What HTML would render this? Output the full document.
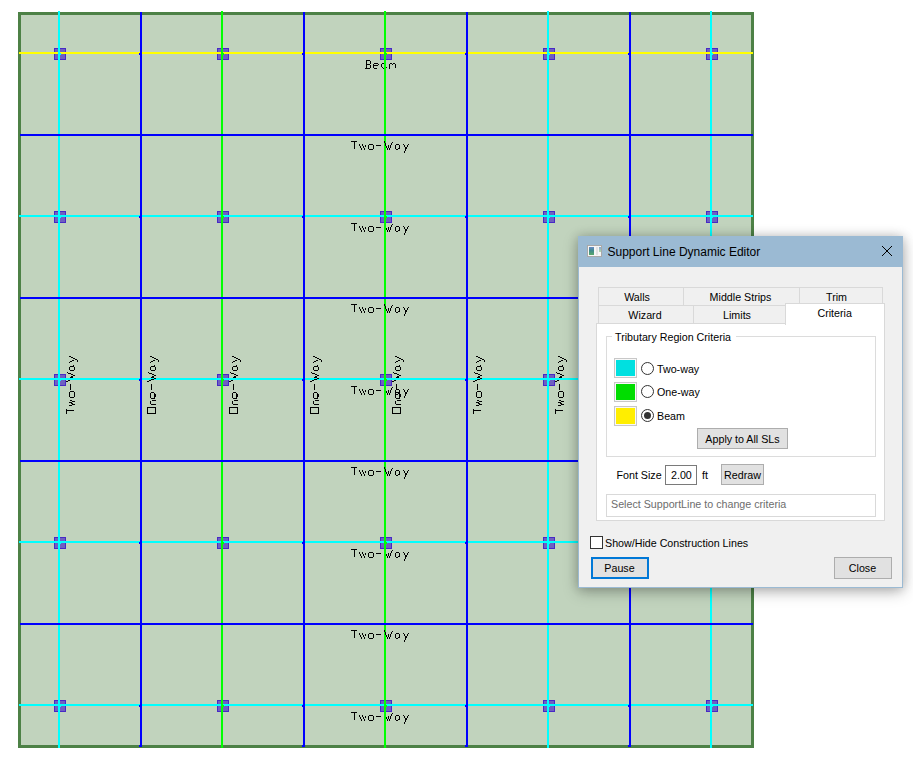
<!DOCTYPE html>
<html><head><meta charset="utf-8"><style>
html,body{margin:0;padding:0;background:#fff;width:913px;height:768px;overflow:hidden;position:relative;font-family:"Liberation Sans",sans-serif}
.a{position:absolute}
.t{position:absolute;white-space:nowrap;font-size:10.7px;color:#000;line-height:1}
</style></head><body>
<svg width="913" height="768" style="position:absolute;left:0;top:0" shape-rendering="crispEdges"><g fill="#000"><rect x="18" y="12" width="736" height="736" fill="#4d8146"/><rect x="21" y="15" width="730" height="730" fill="#c1d3bd"/><rect x="54" y="48" width="12" height="12" fill="#4728c6"/><rect x="55" y="49" width="10" height="10" fill="#6f5fc0"/><rect x="54" y="211" width="12" height="12" fill="#4728c6"/><rect x="55" y="212" width="10" height="10" fill="#6f5fc0"/><rect x="54" y="374" width="12" height="12" fill="#4728c6"/><rect x="55" y="375" width="10" height="10" fill="#6f5fc0"/><rect x="54" y="537" width="12" height="12" fill="#4728c6"/><rect x="55" y="538" width="10" height="10" fill="#6f5fc0"/><rect x="54" y="700" width="12" height="12" fill="#4728c6"/><rect x="55" y="701" width="10" height="10" fill="#6f5fc0"/><rect x="217" y="48" width="12" height="12" fill="#4728c6"/><rect x="218" y="49" width="10" height="10" fill="#6f5fc0"/><rect x="217" y="211" width="12" height="12" fill="#4728c6"/><rect x="218" y="212" width="10" height="10" fill="#6f5fc0"/><rect x="217" y="374" width="12" height="12" fill="#4728c6"/><rect x="218" y="375" width="10" height="10" fill="#6f5fc0"/><rect x="217" y="537" width="12" height="12" fill="#4728c6"/><rect x="218" y="538" width="10" height="10" fill="#6f5fc0"/><rect x="217" y="700" width="12" height="12" fill="#4728c6"/><rect x="218" y="701" width="10" height="10" fill="#6f5fc0"/><rect x="380" y="48" width="12" height="12" fill="#4728c6"/><rect x="381" y="49" width="10" height="10" fill="#6f5fc0"/><rect x="380" y="211" width="12" height="12" fill="#4728c6"/><rect x="381" y="212" width="10" height="10" fill="#6f5fc0"/><rect x="380" y="374" width="12" height="12" fill="#4728c6"/><rect x="381" y="375" width="10" height="10" fill="#6f5fc0"/><rect x="380" y="537" width="12" height="12" fill="#4728c6"/><rect x="381" y="538" width="10" height="10" fill="#6f5fc0"/><rect x="380" y="700" width="12" height="12" fill="#4728c6"/><rect x="381" y="701" width="10" height="10" fill="#6f5fc0"/><rect x="543" y="48" width="12" height="12" fill="#4728c6"/><rect x="544" y="49" width="10" height="10" fill="#6f5fc0"/><rect x="543" y="211" width="12" height="12" fill="#4728c6"/><rect x="544" y="212" width="10" height="10" fill="#6f5fc0"/><rect x="543" y="374" width="12" height="12" fill="#4728c6"/><rect x="544" y="375" width="10" height="10" fill="#6f5fc0"/><rect x="543" y="537" width="12" height="12" fill="#4728c6"/><rect x="544" y="538" width="10" height="10" fill="#6f5fc0"/><rect x="543" y="700" width="12" height="12" fill="#4728c6"/><rect x="544" y="701" width="10" height="10" fill="#6f5fc0"/><rect x="706" y="48" width="12" height="12" fill="#4728c6"/><rect x="707" y="49" width="10" height="10" fill="#6f5fc0"/><rect x="706" y="211" width="12" height="12" fill="#4728c6"/><rect x="707" y="212" width="10" height="10" fill="#6f5fc0"/><rect x="706" y="374" width="12" height="12" fill="#4728c6"/><rect x="707" y="375" width="10" height="10" fill="#6f5fc0"/><rect x="706" y="537" width="12" height="12" fill="#4728c6"/><rect x="707" y="538" width="10" height="10" fill="#6f5fc0"/><rect x="706" y="700" width="12" height="12" fill="#4728c6"/><rect x="707" y="701" width="10" height="10" fill="#6f5fc0"/><path transform="translate(365,60)" d="M1,0h4v1h-4zM1,1h1v1h-1zM5,1h1v1h-1zM1,2h1v1h-1zM5,2h1v1h-1zM1,3h1v1h-1zM5,3h1v1h-1zM1,4h4v1h-4zM1,5h1v1h-1zM5,5h1v1h-1zM1,6h1v1h-1zM5,6h1v1h-1zM1,7h1v1h-1zM5,7h1v1h-1zM0,8h5v1h-5zM9,3h4v1h-4zM8,4h1v1h-1zM13,4h1v1h-1zM8,5h5v1h-5zM8,6h1v1h-1zM8,7h1v1h-1zM9,8h3v1h-3zM17,3h4v1h-4zM16,4h1v1h-1zM16,5h1v1h-1zM16,6h1v1h-1zM17,7h1v1h-1zM21,7h1v1h-1zM18,8h1v1h-1zM25,3h2v1h-2zM28,3h2v1h-2zM24,4h1v1h-1zM27,4h1v1h-1zM30,4h1v1h-1zM24,5h1v1h-1zM30,5h1v1h-1zM24,6h1v1h-1zM30,6h1v1h-1zM24,7h1v1h-1zM30,7h1v1h-1zM24,8h1v1h-1z"/><path transform="translate(351,223)" d="M0,0h6v1h-6zM3,1h1v1h-1zM3,2h1v1h-1zM3,3h1v1h-1zM3,4h1v1h-1zM3,5h1v1h-1zM3,6h1v1h-1zM3,7h1v1h-1zM8,3h1v1h-1zM11,3h1v1h-1zM8,4h1v1h-1zM11,4h1v1h-1zM14,4h1v1h-1zM9,5h1v1h-1zM12,5h1v1h-1zM14,5h1v1h-1zM9,6h1v1h-1zM12,6h1v1h-1zM10,7h1v1h-1zM13,7h1v1h-1zM10,8h1v1h-1zM13,8h1v1h-1zM18,3h4v1h-4zM17,4h1v1h-1zM22,4h1v1h-1zM17,5h1v1h-1zM22,5h1v1h-1zM17,6h1v1h-1zM22,6h1v1h-1zM17,7h1v1h-1zM22,7h1v1h-1zM18,8h4v1h-4zM25,4h5v1h-5zM33,0h1v1h-1zM33,1h1v1h-1zM41,1h1v1h-1zM34,2h1v1h-1zM40,2h1v1h-1zM34,3h1v1h-1zM40,3h1v1h-1zM34,4h1v1h-1zM37,4h1v1h-1zM39,4h1v1h-1zM35,5h1v1h-1zM37,5h1v1h-1zM39,5h1v1h-1zM35,6h1v1h-1zM37,6h1v1h-1zM39,6h1v1h-1zM36,7h1v1h-1zM38,7h1v1h-1zM36,8h1v1h-1zM38,8h1v1h-1zM45,3h3v1h-3zM44,4h1v1h-1zM48,4h1v1h-1zM44,5h1v1h-1zM48,5h1v1h-1zM44,6h1v1h-1zM48,6h1v1h-1zM44,7h1v1h-1zM47,7h2v1h-2zM45,8h2v1h-2zM52,3h1v1h-1zM57,3h1v1h-1zM53,4h1v1h-1zM56,4h1v1h-1zM53,5h1v1h-1zM56,5h1v1h-1zM54,6h2v1h-2zM54,7h2v1h-2zM54,8h1v1h-1zM54,9h1v1h-1zM53,10h1v1h-1zM53,11h1v1h-1z"/><path transform="translate(351,386)" d="M0,0h6v1h-6zM3,1h1v1h-1zM3,2h1v1h-1zM3,3h1v1h-1zM3,4h1v1h-1zM3,5h1v1h-1zM3,6h1v1h-1zM3,7h1v1h-1zM8,3h1v1h-1zM11,3h1v1h-1zM8,4h1v1h-1zM11,4h1v1h-1zM14,4h1v1h-1zM9,5h1v1h-1zM12,5h1v1h-1zM14,5h1v1h-1zM9,6h1v1h-1zM12,6h1v1h-1zM10,7h1v1h-1zM13,7h1v1h-1zM10,8h1v1h-1zM13,8h1v1h-1zM18,3h4v1h-4zM17,4h1v1h-1zM22,4h1v1h-1zM17,5h1v1h-1zM22,5h1v1h-1zM17,6h1v1h-1zM22,6h1v1h-1zM17,7h1v1h-1zM22,7h1v1h-1zM18,8h4v1h-4zM25,4h5v1h-5zM33,0h1v1h-1zM33,1h1v1h-1zM41,1h1v1h-1zM34,2h1v1h-1zM40,2h1v1h-1zM34,3h1v1h-1zM40,3h1v1h-1zM34,4h1v1h-1zM37,4h1v1h-1zM39,4h1v1h-1zM35,5h1v1h-1zM37,5h1v1h-1zM39,5h1v1h-1zM35,6h1v1h-1zM37,6h1v1h-1zM39,6h1v1h-1zM36,7h1v1h-1zM38,7h1v1h-1zM36,8h1v1h-1zM38,8h1v1h-1zM45,3h3v1h-3zM44,4h1v1h-1zM48,4h1v1h-1zM44,5h1v1h-1zM48,5h1v1h-1zM44,6h1v1h-1zM48,6h1v1h-1zM44,7h1v1h-1zM47,7h2v1h-2zM45,8h2v1h-2zM52,3h1v1h-1zM57,3h1v1h-1zM53,4h1v1h-1zM56,4h1v1h-1zM53,5h1v1h-1zM56,5h1v1h-1zM54,6h2v1h-2zM54,7h2v1h-2zM54,8h1v1h-1zM54,9h1v1h-1zM53,10h1v1h-1zM53,11h1v1h-1z"/><path transform="translate(351,549)" d="M0,0h6v1h-6zM3,1h1v1h-1zM3,2h1v1h-1zM3,3h1v1h-1zM3,4h1v1h-1zM3,5h1v1h-1zM3,6h1v1h-1zM3,7h1v1h-1zM8,3h1v1h-1zM11,3h1v1h-1zM8,4h1v1h-1zM11,4h1v1h-1zM14,4h1v1h-1zM9,5h1v1h-1zM12,5h1v1h-1zM14,5h1v1h-1zM9,6h1v1h-1zM12,6h1v1h-1zM10,7h1v1h-1zM13,7h1v1h-1zM10,8h1v1h-1zM13,8h1v1h-1zM18,3h4v1h-4zM17,4h1v1h-1zM22,4h1v1h-1zM17,5h1v1h-1zM22,5h1v1h-1zM17,6h1v1h-1zM22,6h1v1h-1zM17,7h1v1h-1zM22,7h1v1h-1zM18,8h4v1h-4zM25,4h5v1h-5zM33,0h1v1h-1zM33,1h1v1h-1zM41,1h1v1h-1zM34,2h1v1h-1zM40,2h1v1h-1zM34,3h1v1h-1zM40,3h1v1h-1zM34,4h1v1h-1zM37,4h1v1h-1zM39,4h1v1h-1zM35,5h1v1h-1zM37,5h1v1h-1zM39,5h1v1h-1zM35,6h1v1h-1zM37,6h1v1h-1zM39,6h1v1h-1zM36,7h1v1h-1zM38,7h1v1h-1zM36,8h1v1h-1zM38,8h1v1h-1zM45,3h3v1h-3zM44,4h1v1h-1zM48,4h1v1h-1zM44,5h1v1h-1zM48,5h1v1h-1zM44,6h1v1h-1zM48,6h1v1h-1zM44,7h1v1h-1zM47,7h2v1h-2zM45,8h2v1h-2zM52,3h1v1h-1zM57,3h1v1h-1zM53,4h1v1h-1zM56,4h1v1h-1zM53,5h1v1h-1zM56,5h1v1h-1zM54,6h2v1h-2zM54,7h2v1h-2zM54,8h1v1h-1zM54,9h1v1h-1zM53,10h1v1h-1zM53,11h1v1h-1z"/><path transform="translate(351,712)" d="M0,0h6v1h-6zM3,1h1v1h-1zM3,2h1v1h-1zM3,3h1v1h-1zM3,4h1v1h-1zM3,5h1v1h-1zM3,6h1v1h-1zM3,7h1v1h-1zM8,3h1v1h-1zM11,3h1v1h-1zM8,4h1v1h-1zM11,4h1v1h-1zM14,4h1v1h-1zM9,5h1v1h-1zM12,5h1v1h-1zM14,5h1v1h-1zM9,6h1v1h-1zM12,6h1v1h-1zM10,7h1v1h-1zM13,7h1v1h-1zM10,8h1v1h-1zM13,8h1v1h-1zM18,3h4v1h-4zM17,4h1v1h-1zM22,4h1v1h-1zM17,5h1v1h-1zM22,5h1v1h-1zM17,6h1v1h-1zM22,6h1v1h-1zM17,7h1v1h-1zM22,7h1v1h-1zM18,8h4v1h-4zM25,4h5v1h-5zM33,0h1v1h-1zM33,1h1v1h-1zM41,1h1v1h-1zM34,2h1v1h-1zM40,2h1v1h-1zM34,3h1v1h-1zM40,3h1v1h-1zM34,4h1v1h-1zM37,4h1v1h-1zM39,4h1v1h-1zM35,5h1v1h-1zM37,5h1v1h-1zM39,5h1v1h-1zM35,6h1v1h-1zM37,6h1v1h-1zM39,6h1v1h-1zM36,7h1v1h-1zM38,7h1v1h-1zM36,8h1v1h-1zM38,8h1v1h-1zM45,3h3v1h-3zM44,4h1v1h-1zM48,4h1v1h-1zM44,5h1v1h-1zM48,5h1v1h-1zM44,6h1v1h-1zM48,6h1v1h-1zM44,7h1v1h-1zM47,7h2v1h-2zM45,8h2v1h-2zM52,3h1v1h-1zM57,3h1v1h-1zM53,4h1v1h-1zM56,4h1v1h-1zM53,5h1v1h-1zM56,5h1v1h-1zM54,6h2v1h-2zM54,7h2v1h-2zM54,8h1v1h-1zM54,9h1v1h-1zM53,10h1v1h-1zM53,11h1v1h-1z"/><path d="M66,413h1v1h-1zM66,412h1v1h-1zM66,411h1v1h-1zM66,410h1v1h-1zM66,409h1v1h-1zM66,381h1v1h-1zM67,410h1v1h-1zM67,381h1v1h-1zM67,372h1v1h-1zM68,410h1v1h-1zM68,380h1v1h-1zM68,373h1v1h-1zM69,410h1v1h-1zM69,405h1v1h-1zM69,402h1v1h-1zM69,396h1v1h-1zM69,395h1v1h-1zM69,394h1v1h-1zM69,393h1v1h-1zM69,392h1v1h-1zM69,380h1v1h-1zM69,373h1v1h-1zM69,369h1v1h-1zM69,368h1v1h-1zM69,367h1v1h-1zM69,362h1v1h-1zM69,356h1v1h-1zM70,410h1v1h-1zM70,405h1v1h-1zM70,402h1v1h-1zM70,400h1v1h-1zM70,397h1v1h-1zM70,391h1v1h-1zM70,389h1v1h-1zM70,388h1v1h-1zM70,387h1v1h-1zM70,386h1v1h-1zM70,385h1v1h-1zM70,384h1v1h-1zM70,379h1v1h-1zM70,377h1v1h-1zM70,373h1v1h-1zM70,370h1v1h-1zM70,366h1v1h-1zM70,361h1v1h-1zM70,356h1v1h-1zM71,410h1v1h-1zM71,405h1v1h-1zM71,403h1v1h-1zM71,402h1v1h-1zM71,400h1v1h-1zM71,397h1v1h-1zM71,391h1v1h-1zM71,379h1v1h-1zM71,377h1v1h-1zM71,376h1v1h-1zM71,374h1v1h-1zM71,370h1v1h-1zM71,366h1v1h-1zM71,361h1v1h-1zM71,357h1v1h-1zM72,410h1v1h-1zM72,404h1v1h-1zM72,403h1v1h-1zM72,401h1v1h-1zM72,397h1v1h-1zM72,391h1v1h-1zM72,379h1v1h-1zM72,377h1v1h-1zM72,376h1v1h-1zM72,374h1v1h-1zM72,370h1v1h-1zM72,366h1v1h-1zM72,360h1v1h-1zM72,357h1v1h-1zM73,410h1v1h-1zM73,404h1v1h-1zM73,401h1v1h-1zM73,397h1v1h-1zM73,391h1v1h-1zM73,378h1v1h-1zM73,375h1v1h-1zM73,370h1v1h-1zM73,366h1v1h-1zM73,365h1v1h-1zM73,360h1v1h-1zM73,358h1v1h-1zM74,404h1v1h-1zM74,401h1v1h-1zM74,396h1v1h-1zM74,395h1v1h-1zM74,394h1v1h-1zM74,393h1v1h-1zM74,392h1v1h-1zM74,378h1v1h-1zM74,375h1v1h-1zM74,369h1v1h-1zM74,368h1v1h-1zM74,367h1v1h-1zM74,358h1v1h-1zM75,359h1v1h-1zM76,359h1v1h-1zM77,361h1v1h-1zM77,360h1v1h-1z"/><path d="M229,413h1v1h-1zM229,412h1v1h-1zM229,411h1v1h-1zM229,410h1v1h-1zM229,409h1v1h-1zM229,408h1v1h-1zM229,407h1v1h-1zM229,381h1v1h-1zM230,413h1v1h-1zM230,407h1v1h-1zM230,381h1v1h-1zM230,372h1v1h-1zM231,413h1v1h-1zM231,407h1v1h-1zM231,380h1v1h-1zM231,373h1v1h-1zM232,413h1v1h-1zM232,407h1v1h-1zM232,403h1v1h-1zM232,402h1v1h-1zM232,401h1v1h-1zM232,397h1v1h-1zM232,396h1v1h-1zM232,395h1v1h-1zM232,394h1v1h-1zM232,393h1v1h-1zM232,380h1v1h-1zM232,373h1v1h-1zM232,369h1v1h-1zM232,368h1v1h-1zM232,367h1v1h-1zM232,362h1v1h-1zM232,356h1v1h-1zM233,413h1v1h-1zM233,407h1v1h-1zM233,404h1v1h-1zM233,398h1v1h-1zM233,392h1v1h-1zM233,389h1v1h-1zM233,388h1v1h-1zM233,387h1v1h-1zM233,386h1v1h-1zM233,385h1v1h-1zM233,384h1v1h-1zM233,379h1v1h-1zM233,377h1v1h-1zM233,373h1v1h-1zM233,370h1v1h-1zM233,366h1v1h-1zM233,361h1v1h-1zM233,356h1v1h-1zM234,413h1v1h-1zM234,407h1v1h-1zM234,404h1v1h-1zM234,400h1v1h-1zM234,398h1v1h-1zM234,392h1v1h-1zM234,379h1v1h-1zM234,377h1v1h-1zM234,376h1v1h-1zM234,374h1v1h-1zM234,370h1v1h-1zM234,366h1v1h-1zM234,361h1v1h-1zM234,357h1v1h-1zM235,413h1v1h-1zM235,407h1v1h-1zM235,404h1v1h-1zM235,400h1v1h-1zM235,398h1v1h-1zM235,392h1v1h-1zM235,379h1v1h-1zM235,377h1v1h-1zM235,376h1v1h-1zM235,374h1v1h-1zM235,370h1v1h-1zM235,366h1v1h-1zM235,360h1v1h-1zM235,357h1v1h-1zM236,413h1v1h-1zM236,407h1v1h-1zM236,404h1v1h-1zM236,400h1v1h-1zM236,398h1v1h-1zM236,397h1v1h-1zM236,396h1v1h-1zM236,395h1v1h-1zM236,394h1v1h-1zM236,393h1v1h-1zM236,378h1v1h-1zM236,375h1v1h-1zM236,370h1v1h-1zM236,366h1v1h-1zM236,365h1v1h-1zM236,360h1v1h-1zM236,358h1v1h-1zM237,413h1v1h-1zM237,412h1v1h-1zM237,411h1v1h-1zM237,410h1v1h-1zM237,409h1v1h-1zM237,408h1v1h-1zM237,407h1v1h-1zM237,404h1v1h-1zM237,400h1v1h-1zM237,396h1v1h-1zM237,395h1v1h-1zM237,394h1v1h-1zM237,378h1v1h-1zM237,375h1v1h-1zM237,369h1v1h-1zM237,368h1v1h-1zM237,367h1v1h-1zM237,358h1v1h-1zM238,359h1v1h-1zM239,359h1v1h-1zM240,361h1v1h-1zM240,360h1v1h-1z"/><path d="M392,413h1v1h-1zM392,412h1v1h-1zM392,411h1v1h-1zM392,410h1v1h-1zM392,409h1v1h-1zM392,408h1v1h-1zM392,407h1v1h-1zM392,381h1v1h-1zM393,413h1v1h-1zM393,407h1v1h-1zM393,381h1v1h-1zM393,372h1v1h-1zM394,413h1v1h-1zM394,407h1v1h-1zM394,380h1v1h-1zM394,373h1v1h-1zM395,413h1v1h-1zM395,407h1v1h-1zM395,403h1v1h-1zM395,402h1v1h-1zM395,401h1v1h-1zM395,397h1v1h-1zM395,396h1v1h-1zM395,395h1v1h-1zM395,394h1v1h-1zM395,393h1v1h-1zM395,380h1v1h-1zM395,373h1v1h-1zM395,369h1v1h-1zM395,368h1v1h-1zM395,367h1v1h-1zM395,362h1v1h-1zM395,356h1v1h-1zM396,413h1v1h-1zM396,407h1v1h-1zM396,404h1v1h-1zM396,398h1v1h-1zM396,392h1v1h-1zM396,389h1v1h-1zM396,388h1v1h-1zM396,387h1v1h-1zM396,386h1v1h-1zM396,385h1v1h-1zM396,384h1v1h-1zM396,379h1v1h-1zM396,377h1v1h-1zM396,373h1v1h-1zM396,370h1v1h-1zM396,366h1v1h-1zM396,361h1v1h-1zM396,356h1v1h-1zM397,413h1v1h-1zM397,407h1v1h-1zM397,404h1v1h-1zM397,400h1v1h-1zM397,398h1v1h-1zM397,392h1v1h-1zM397,379h1v1h-1zM397,377h1v1h-1zM397,376h1v1h-1zM397,374h1v1h-1zM397,370h1v1h-1zM397,366h1v1h-1zM397,361h1v1h-1zM397,357h1v1h-1zM398,413h1v1h-1zM398,407h1v1h-1zM398,404h1v1h-1zM398,400h1v1h-1zM398,398h1v1h-1zM398,392h1v1h-1zM398,379h1v1h-1zM398,377h1v1h-1zM398,376h1v1h-1zM398,374h1v1h-1zM398,370h1v1h-1zM398,366h1v1h-1zM398,360h1v1h-1zM398,357h1v1h-1zM399,413h1v1h-1zM399,407h1v1h-1zM399,404h1v1h-1zM399,400h1v1h-1zM399,398h1v1h-1zM399,397h1v1h-1zM399,396h1v1h-1zM399,395h1v1h-1zM399,394h1v1h-1zM399,393h1v1h-1zM399,378h1v1h-1zM399,375h1v1h-1zM399,370h1v1h-1zM399,366h1v1h-1zM399,365h1v1h-1zM399,360h1v1h-1zM399,358h1v1h-1zM400,413h1v1h-1zM400,412h1v1h-1zM400,411h1v1h-1zM400,410h1v1h-1zM400,409h1v1h-1zM400,408h1v1h-1zM400,407h1v1h-1zM400,404h1v1h-1zM400,400h1v1h-1zM400,396h1v1h-1zM400,395h1v1h-1zM400,394h1v1h-1zM400,378h1v1h-1zM400,375h1v1h-1zM400,369h1v1h-1zM400,368h1v1h-1zM400,367h1v1h-1zM400,358h1v1h-1zM401,359h1v1h-1zM402,359h1v1h-1zM403,361h1v1h-1zM403,360h1v1h-1z"/><path d="M555,413h1v1h-1zM555,412h1v1h-1zM555,411h1v1h-1zM555,410h1v1h-1zM555,409h1v1h-1zM555,381h1v1h-1zM556,410h1v1h-1zM556,381h1v1h-1zM556,372h1v1h-1zM557,410h1v1h-1zM557,380h1v1h-1zM557,373h1v1h-1zM558,410h1v1h-1zM558,405h1v1h-1zM558,402h1v1h-1zM558,396h1v1h-1zM558,395h1v1h-1zM558,394h1v1h-1zM558,393h1v1h-1zM558,392h1v1h-1zM558,380h1v1h-1zM558,373h1v1h-1zM558,369h1v1h-1zM558,368h1v1h-1zM558,367h1v1h-1zM558,362h1v1h-1zM558,356h1v1h-1zM559,410h1v1h-1zM559,405h1v1h-1zM559,402h1v1h-1zM559,400h1v1h-1zM559,397h1v1h-1zM559,391h1v1h-1zM559,389h1v1h-1zM559,388h1v1h-1zM559,387h1v1h-1zM559,386h1v1h-1zM559,385h1v1h-1zM559,384h1v1h-1zM559,379h1v1h-1zM559,377h1v1h-1zM559,373h1v1h-1zM559,370h1v1h-1zM559,366h1v1h-1zM559,361h1v1h-1zM559,356h1v1h-1zM560,410h1v1h-1zM560,405h1v1h-1zM560,403h1v1h-1zM560,402h1v1h-1zM560,400h1v1h-1zM560,397h1v1h-1zM560,391h1v1h-1zM560,379h1v1h-1zM560,377h1v1h-1zM560,376h1v1h-1zM560,374h1v1h-1zM560,370h1v1h-1zM560,366h1v1h-1zM560,361h1v1h-1zM560,357h1v1h-1zM561,410h1v1h-1zM561,404h1v1h-1zM561,403h1v1h-1zM561,401h1v1h-1zM561,397h1v1h-1zM561,391h1v1h-1zM561,379h1v1h-1zM561,377h1v1h-1zM561,376h1v1h-1zM561,374h1v1h-1zM561,370h1v1h-1zM561,366h1v1h-1zM561,360h1v1h-1zM561,357h1v1h-1zM562,410h1v1h-1zM562,404h1v1h-1zM562,401h1v1h-1zM562,397h1v1h-1zM562,391h1v1h-1zM562,378h1v1h-1zM562,375h1v1h-1zM562,370h1v1h-1zM562,366h1v1h-1zM562,365h1v1h-1zM562,360h1v1h-1zM562,358h1v1h-1zM563,404h1v1h-1zM563,401h1v1h-1zM563,396h1v1h-1zM563,395h1v1h-1zM563,394h1v1h-1zM563,393h1v1h-1zM563,392h1v1h-1zM563,378h1v1h-1zM563,375h1v1h-1zM563,369h1v1h-1zM563,368h1v1h-1zM563,367h1v1h-1zM563,358h1v1h-1zM564,359h1v1h-1zM565,359h1v1h-1zM566,361h1v1h-1zM566,360h1v1h-1z"/><rect x="19" y="52" width="734" height="2" fill="#ffff00"/><rect x="19" y="215" width="734" height="2" fill="#00ffff"/><rect x="19" y="378" width="734" height="2" fill="#00ffff"/><rect x="19" y="541" width="734" height="2" fill="#00ffff"/><rect x="19" y="704" width="734" height="2" fill="#00ffff"/><rect x="58" y="11" width="2" height="737" fill="#00ffff"/><rect x="60" y="53" width="1" height="2" fill="#00ffff"/><rect x="60" y="216" width="1" height="2" fill="#00ffff"/><rect x="60" y="379" width="1" height="2" fill="#00ffff"/><rect x="60" y="542" width="1" height="2" fill="#00ffff"/><rect x="60" y="705" width="1" height="2" fill="#00ffff"/><rect x="221" y="11" width="2" height="737" fill="#00ff00"/><rect x="223" y="53" width="1" height="2" fill="#00ff00"/><rect x="223" y="216" width="1" height="2" fill="#00ff00"/><rect x="223" y="379" width="1" height="2" fill="#00ff00"/><rect x="223" y="542" width="1" height="2" fill="#00ff00"/><rect x="223" y="705" width="1" height="2" fill="#00ff00"/><rect x="384" y="11" width="2" height="737" fill="#00ff00"/><rect x="386" y="53" width="1" height="2" fill="#00ff00"/><rect x="386" y="216" width="1" height="2" fill="#00ff00"/><rect x="386" y="379" width="1" height="2" fill="#00ff00"/><rect x="386" y="542" width="1" height="2" fill="#00ff00"/><rect x="386" y="705" width="1" height="2" fill="#00ff00"/><rect x="547" y="11" width="2" height="737" fill="#00ffff"/><rect x="549" y="53" width="1" height="2" fill="#00ffff"/><rect x="549" y="216" width="1" height="2" fill="#00ffff"/><rect x="549" y="379" width="1" height="2" fill="#00ffff"/><rect x="549" y="542" width="1" height="2" fill="#00ffff"/><rect x="549" y="705" width="1" height="2" fill="#00ffff"/><rect x="710" y="11" width="2" height="737" fill="#00ffff"/><rect x="712" y="53" width="1" height="2" fill="#00ffff"/><rect x="712" y="216" width="1" height="2" fill="#00ffff"/><rect x="712" y="379" width="1" height="2" fill="#00ffff"/><rect x="712" y="542" width="1" height="2" fill="#00ffff"/><rect x="712" y="705" width="1" height="2" fill="#00ffff"/><rect x="20" y="134" width="733" height="2" fill="#0000ff"/><rect x="20" y="297" width="733" height="2" fill="#0000ff"/><rect x="20" y="460" width="733" height="2" fill="#0000ff"/><rect x="20" y="623" width="733" height="2" fill="#0000ff"/><rect x="140" y="12" width="2" height="735" fill="#0000ff"/><rect x="139" y="53" width="1" height="2" fill="#0000ff"/><rect x="139" y="216" width="1" height="2" fill="#0000ff"/><rect x="139" y="379" width="1" height="2" fill="#0000ff"/><rect x="139" y="542" width="1" height="2" fill="#0000ff"/><rect x="139" y="705" width="1" height="2" fill="#0000ff"/><rect x="139" y="745" width="1" height="2" fill="#0000ff"/><rect x="303" y="12" width="2" height="735" fill="#0000ff"/><rect x="302" y="53" width="1" height="2" fill="#0000ff"/><rect x="302" y="216" width="1" height="2" fill="#0000ff"/><rect x="302" y="379" width="1" height="2" fill="#0000ff"/><rect x="302" y="542" width="1" height="2" fill="#0000ff"/><rect x="302" y="705" width="1" height="2" fill="#0000ff"/><rect x="302" y="745" width="1" height="2" fill="#0000ff"/><rect x="466" y="12" width="2" height="735" fill="#0000ff"/><rect x="465" y="53" width="1" height="2" fill="#0000ff"/><rect x="465" y="216" width="1" height="2" fill="#0000ff"/><rect x="465" y="379" width="1" height="2" fill="#0000ff"/><rect x="465" y="542" width="1" height="2" fill="#0000ff"/><rect x="465" y="705" width="1" height="2" fill="#0000ff"/><rect x="465" y="745" width="1" height="2" fill="#0000ff"/><rect x="629" y="12" width="2" height="735" fill="#0000ff"/><rect x="628" y="53" width="1" height="2" fill="#0000ff"/><rect x="628" y="216" width="1" height="2" fill="#0000ff"/><rect x="628" y="379" width="1" height="2" fill="#0000ff"/><rect x="628" y="542" width="1" height="2" fill="#0000ff"/><rect x="628" y="705" width="1" height="2" fill="#0000ff"/><rect x="628" y="745" width="1" height="2" fill="#0000ff"/><path transform="translate(351,141)" d="M0,0h6v1h-6zM3,1h1v1h-1zM3,2h1v1h-1zM3,3h1v1h-1zM3,4h1v1h-1zM3,5h1v1h-1zM3,6h1v1h-1zM3,7h1v1h-1zM8,3h1v1h-1zM11,3h1v1h-1zM8,4h1v1h-1zM11,4h1v1h-1zM14,4h1v1h-1zM9,5h1v1h-1zM12,5h1v1h-1zM14,5h1v1h-1zM9,6h1v1h-1zM12,6h1v1h-1zM10,7h1v1h-1zM13,7h1v1h-1zM10,8h1v1h-1zM13,8h1v1h-1zM18,3h4v1h-4zM17,4h1v1h-1zM22,4h1v1h-1zM17,5h1v1h-1zM22,5h1v1h-1zM17,6h1v1h-1zM22,6h1v1h-1zM17,7h1v1h-1zM22,7h1v1h-1zM18,8h4v1h-4zM25,4h5v1h-5zM33,0h1v1h-1zM33,1h1v1h-1zM41,1h1v1h-1zM34,2h1v1h-1zM40,2h1v1h-1zM34,3h1v1h-1zM40,3h1v1h-1zM34,4h1v1h-1zM37,4h1v1h-1zM39,4h1v1h-1zM35,5h1v1h-1zM37,5h1v1h-1zM39,5h1v1h-1zM35,6h1v1h-1zM37,6h1v1h-1zM39,6h1v1h-1zM36,7h1v1h-1zM38,7h1v1h-1zM36,8h1v1h-1zM38,8h1v1h-1zM45,3h3v1h-3zM44,4h1v1h-1zM48,4h1v1h-1zM44,5h1v1h-1zM48,5h1v1h-1zM44,6h1v1h-1zM48,6h1v1h-1zM44,7h1v1h-1zM47,7h2v1h-2zM45,8h2v1h-2zM52,3h1v1h-1zM57,3h1v1h-1zM53,4h1v1h-1zM56,4h1v1h-1zM53,5h1v1h-1zM56,5h1v1h-1zM54,6h2v1h-2zM54,7h2v1h-2zM54,8h1v1h-1zM54,9h1v1h-1zM53,10h1v1h-1zM53,11h1v1h-1z"/><path transform="translate(351,304)" d="M0,0h6v1h-6zM3,1h1v1h-1zM3,2h1v1h-1zM3,3h1v1h-1zM3,4h1v1h-1zM3,5h1v1h-1zM3,6h1v1h-1zM3,7h1v1h-1zM8,3h1v1h-1zM11,3h1v1h-1zM8,4h1v1h-1zM11,4h1v1h-1zM14,4h1v1h-1zM9,5h1v1h-1zM12,5h1v1h-1zM14,5h1v1h-1zM9,6h1v1h-1zM12,6h1v1h-1zM10,7h1v1h-1zM13,7h1v1h-1zM10,8h1v1h-1zM13,8h1v1h-1zM18,3h4v1h-4zM17,4h1v1h-1zM22,4h1v1h-1zM17,5h1v1h-1zM22,5h1v1h-1zM17,6h1v1h-1zM22,6h1v1h-1zM17,7h1v1h-1zM22,7h1v1h-1zM18,8h4v1h-4zM25,4h5v1h-5zM33,0h1v1h-1zM33,1h1v1h-1zM41,1h1v1h-1zM34,2h1v1h-1zM40,2h1v1h-1zM34,3h1v1h-1zM40,3h1v1h-1zM34,4h1v1h-1zM37,4h1v1h-1zM39,4h1v1h-1zM35,5h1v1h-1zM37,5h1v1h-1zM39,5h1v1h-1zM35,6h1v1h-1zM37,6h1v1h-1zM39,6h1v1h-1zM36,7h1v1h-1zM38,7h1v1h-1zM36,8h1v1h-1zM38,8h1v1h-1zM45,3h3v1h-3zM44,4h1v1h-1zM48,4h1v1h-1zM44,5h1v1h-1zM48,5h1v1h-1zM44,6h1v1h-1zM48,6h1v1h-1zM44,7h1v1h-1zM47,7h2v1h-2zM45,8h2v1h-2zM52,3h1v1h-1zM57,3h1v1h-1zM53,4h1v1h-1zM56,4h1v1h-1zM53,5h1v1h-1zM56,5h1v1h-1zM54,6h2v1h-2zM54,7h2v1h-2zM54,8h1v1h-1zM54,9h1v1h-1zM53,10h1v1h-1zM53,11h1v1h-1z"/><path transform="translate(351,467)" d="M0,0h6v1h-6zM3,1h1v1h-1zM3,2h1v1h-1zM3,3h1v1h-1zM3,4h1v1h-1zM3,5h1v1h-1zM3,6h1v1h-1zM3,7h1v1h-1zM8,3h1v1h-1zM11,3h1v1h-1zM8,4h1v1h-1zM11,4h1v1h-1zM14,4h1v1h-1zM9,5h1v1h-1zM12,5h1v1h-1zM14,5h1v1h-1zM9,6h1v1h-1zM12,6h1v1h-1zM10,7h1v1h-1zM13,7h1v1h-1zM10,8h1v1h-1zM13,8h1v1h-1zM18,3h4v1h-4zM17,4h1v1h-1zM22,4h1v1h-1zM17,5h1v1h-1zM22,5h1v1h-1zM17,6h1v1h-1zM22,6h1v1h-1zM17,7h1v1h-1zM22,7h1v1h-1zM18,8h4v1h-4zM25,4h5v1h-5zM33,0h1v1h-1zM33,1h1v1h-1zM41,1h1v1h-1zM34,2h1v1h-1zM40,2h1v1h-1zM34,3h1v1h-1zM40,3h1v1h-1zM34,4h1v1h-1zM37,4h1v1h-1zM39,4h1v1h-1zM35,5h1v1h-1zM37,5h1v1h-1zM39,5h1v1h-1zM35,6h1v1h-1zM37,6h1v1h-1zM39,6h1v1h-1zM36,7h1v1h-1zM38,7h1v1h-1zM36,8h1v1h-1zM38,8h1v1h-1zM45,3h3v1h-3zM44,4h1v1h-1zM48,4h1v1h-1zM44,5h1v1h-1zM48,5h1v1h-1zM44,6h1v1h-1zM48,6h1v1h-1zM44,7h1v1h-1zM47,7h2v1h-2zM45,8h2v1h-2zM52,3h1v1h-1zM57,3h1v1h-1zM53,4h1v1h-1zM56,4h1v1h-1zM53,5h1v1h-1zM56,5h1v1h-1zM54,6h2v1h-2zM54,7h2v1h-2zM54,8h1v1h-1zM54,9h1v1h-1zM53,10h1v1h-1zM53,11h1v1h-1z"/><path transform="translate(351,630)" d="M0,0h6v1h-6zM3,1h1v1h-1zM3,2h1v1h-1zM3,3h1v1h-1zM3,4h1v1h-1zM3,5h1v1h-1zM3,6h1v1h-1zM3,7h1v1h-1zM8,3h1v1h-1zM11,3h1v1h-1zM8,4h1v1h-1zM11,4h1v1h-1zM14,4h1v1h-1zM9,5h1v1h-1zM12,5h1v1h-1zM14,5h1v1h-1zM9,6h1v1h-1zM12,6h1v1h-1zM10,7h1v1h-1zM13,7h1v1h-1zM10,8h1v1h-1zM13,8h1v1h-1zM18,3h4v1h-4zM17,4h1v1h-1zM22,4h1v1h-1zM17,5h1v1h-1zM22,5h1v1h-1zM17,6h1v1h-1zM22,6h1v1h-1zM17,7h1v1h-1zM22,7h1v1h-1zM18,8h4v1h-4zM25,4h5v1h-5zM33,0h1v1h-1zM33,1h1v1h-1zM41,1h1v1h-1zM34,2h1v1h-1zM40,2h1v1h-1zM34,3h1v1h-1zM40,3h1v1h-1zM34,4h1v1h-1zM37,4h1v1h-1zM39,4h1v1h-1zM35,5h1v1h-1zM37,5h1v1h-1zM39,5h1v1h-1zM35,6h1v1h-1zM37,6h1v1h-1zM39,6h1v1h-1zM36,7h1v1h-1zM38,7h1v1h-1zM36,8h1v1h-1zM38,8h1v1h-1zM45,3h3v1h-3zM44,4h1v1h-1zM48,4h1v1h-1zM44,5h1v1h-1zM48,5h1v1h-1zM44,6h1v1h-1zM48,6h1v1h-1zM44,7h1v1h-1zM47,7h2v1h-2zM45,8h2v1h-2zM52,3h1v1h-1zM57,3h1v1h-1zM53,4h1v1h-1zM56,4h1v1h-1zM53,5h1v1h-1zM56,5h1v1h-1zM54,6h2v1h-2zM54,7h2v1h-2zM54,8h1v1h-1zM54,9h1v1h-1zM53,10h1v1h-1zM53,11h1v1h-1z"/><path d="M147,413h1v1h-1zM147,412h1v1h-1zM147,411h1v1h-1zM147,410h1v1h-1zM147,409h1v1h-1zM147,408h1v1h-1zM147,407h1v1h-1zM147,381h1v1h-1zM148,413h1v1h-1zM148,407h1v1h-1zM148,381h1v1h-1zM148,372h1v1h-1zM149,413h1v1h-1zM149,407h1v1h-1zM149,380h1v1h-1zM149,373h1v1h-1zM150,413h1v1h-1zM150,407h1v1h-1zM150,403h1v1h-1zM150,402h1v1h-1zM150,401h1v1h-1zM150,397h1v1h-1zM150,396h1v1h-1zM150,395h1v1h-1zM150,394h1v1h-1zM150,393h1v1h-1zM150,380h1v1h-1zM150,373h1v1h-1zM150,369h1v1h-1zM150,368h1v1h-1zM150,367h1v1h-1zM150,362h1v1h-1zM150,356h1v1h-1zM151,413h1v1h-1zM151,407h1v1h-1zM151,404h1v1h-1zM151,398h1v1h-1zM151,392h1v1h-1zM151,389h1v1h-1zM151,388h1v1h-1zM151,387h1v1h-1zM151,386h1v1h-1zM151,385h1v1h-1zM151,384h1v1h-1zM151,379h1v1h-1zM151,377h1v1h-1zM151,373h1v1h-1zM151,370h1v1h-1zM151,366h1v1h-1zM151,361h1v1h-1zM151,356h1v1h-1zM152,413h1v1h-1zM152,407h1v1h-1zM152,404h1v1h-1zM152,400h1v1h-1zM152,398h1v1h-1zM152,392h1v1h-1zM152,379h1v1h-1zM152,377h1v1h-1zM152,376h1v1h-1zM152,374h1v1h-1zM152,370h1v1h-1zM152,366h1v1h-1zM152,361h1v1h-1zM152,357h1v1h-1zM153,413h1v1h-1zM153,407h1v1h-1zM153,404h1v1h-1zM153,400h1v1h-1zM153,398h1v1h-1zM153,392h1v1h-1zM153,379h1v1h-1zM153,377h1v1h-1zM153,376h1v1h-1zM153,374h1v1h-1zM153,370h1v1h-1zM153,366h1v1h-1zM153,360h1v1h-1zM153,357h1v1h-1zM154,413h1v1h-1zM154,407h1v1h-1zM154,404h1v1h-1zM154,400h1v1h-1zM154,398h1v1h-1zM154,397h1v1h-1zM154,396h1v1h-1zM154,395h1v1h-1zM154,394h1v1h-1zM154,393h1v1h-1zM154,378h1v1h-1zM154,375h1v1h-1zM154,370h1v1h-1zM154,366h1v1h-1zM154,365h1v1h-1zM154,360h1v1h-1zM154,358h1v1h-1zM155,413h1v1h-1zM155,412h1v1h-1zM155,411h1v1h-1zM155,410h1v1h-1zM155,409h1v1h-1zM155,408h1v1h-1zM155,407h1v1h-1zM155,404h1v1h-1zM155,400h1v1h-1zM155,396h1v1h-1zM155,395h1v1h-1zM155,394h1v1h-1zM155,378h1v1h-1zM155,375h1v1h-1zM155,369h1v1h-1zM155,368h1v1h-1zM155,367h1v1h-1zM155,358h1v1h-1zM156,359h1v1h-1zM157,359h1v1h-1zM158,361h1v1h-1zM158,360h1v1h-1z"/><path d="M310,413h1v1h-1zM310,412h1v1h-1zM310,411h1v1h-1zM310,410h1v1h-1zM310,409h1v1h-1zM310,408h1v1h-1zM310,407h1v1h-1zM310,381h1v1h-1zM311,413h1v1h-1zM311,407h1v1h-1zM311,381h1v1h-1zM311,372h1v1h-1zM312,413h1v1h-1zM312,407h1v1h-1zM312,380h1v1h-1zM312,373h1v1h-1zM313,413h1v1h-1zM313,407h1v1h-1zM313,403h1v1h-1zM313,402h1v1h-1zM313,401h1v1h-1zM313,397h1v1h-1zM313,396h1v1h-1zM313,395h1v1h-1zM313,394h1v1h-1zM313,393h1v1h-1zM313,380h1v1h-1zM313,373h1v1h-1zM313,369h1v1h-1zM313,368h1v1h-1zM313,367h1v1h-1zM313,362h1v1h-1zM313,356h1v1h-1zM314,413h1v1h-1zM314,407h1v1h-1zM314,404h1v1h-1zM314,398h1v1h-1zM314,392h1v1h-1zM314,389h1v1h-1zM314,388h1v1h-1zM314,387h1v1h-1zM314,386h1v1h-1zM314,385h1v1h-1zM314,384h1v1h-1zM314,379h1v1h-1zM314,377h1v1h-1zM314,373h1v1h-1zM314,370h1v1h-1zM314,366h1v1h-1zM314,361h1v1h-1zM314,356h1v1h-1zM315,413h1v1h-1zM315,407h1v1h-1zM315,404h1v1h-1zM315,400h1v1h-1zM315,398h1v1h-1zM315,392h1v1h-1zM315,379h1v1h-1zM315,377h1v1h-1zM315,376h1v1h-1zM315,374h1v1h-1zM315,370h1v1h-1zM315,366h1v1h-1zM315,361h1v1h-1zM315,357h1v1h-1zM316,413h1v1h-1zM316,407h1v1h-1zM316,404h1v1h-1zM316,400h1v1h-1zM316,398h1v1h-1zM316,392h1v1h-1zM316,379h1v1h-1zM316,377h1v1h-1zM316,376h1v1h-1zM316,374h1v1h-1zM316,370h1v1h-1zM316,366h1v1h-1zM316,360h1v1h-1zM316,357h1v1h-1zM317,413h1v1h-1zM317,407h1v1h-1zM317,404h1v1h-1zM317,400h1v1h-1zM317,398h1v1h-1zM317,397h1v1h-1zM317,396h1v1h-1zM317,395h1v1h-1zM317,394h1v1h-1zM317,393h1v1h-1zM317,378h1v1h-1zM317,375h1v1h-1zM317,370h1v1h-1zM317,366h1v1h-1zM317,365h1v1h-1zM317,360h1v1h-1zM317,358h1v1h-1zM318,413h1v1h-1zM318,412h1v1h-1zM318,411h1v1h-1zM318,410h1v1h-1zM318,409h1v1h-1zM318,408h1v1h-1zM318,407h1v1h-1zM318,404h1v1h-1zM318,400h1v1h-1zM318,396h1v1h-1zM318,395h1v1h-1zM318,394h1v1h-1zM318,378h1v1h-1zM318,375h1v1h-1zM318,369h1v1h-1zM318,368h1v1h-1zM318,367h1v1h-1zM318,358h1v1h-1zM319,359h1v1h-1zM320,359h1v1h-1zM321,361h1v1h-1zM321,360h1v1h-1z"/><path d="M473,413h1v1h-1zM473,412h1v1h-1zM473,411h1v1h-1zM473,410h1v1h-1zM473,409h1v1h-1zM473,381h1v1h-1zM474,410h1v1h-1zM474,381h1v1h-1zM474,372h1v1h-1zM475,410h1v1h-1zM475,380h1v1h-1zM475,373h1v1h-1zM476,410h1v1h-1zM476,405h1v1h-1zM476,402h1v1h-1zM476,396h1v1h-1zM476,395h1v1h-1zM476,394h1v1h-1zM476,393h1v1h-1zM476,392h1v1h-1zM476,380h1v1h-1zM476,373h1v1h-1zM476,369h1v1h-1zM476,368h1v1h-1zM476,367h1v1h-1zM476,362h1v1h-1zM476,356h1v1h-1zM477,410h1v1h-1zM477,405h1v1h-1zM477,402h1v1h-1zM477,400h1v1h-1zM477,397h1v1h-1zM477,391h1v1h-1zM477,389h1v1h-1zM477,388h1v1h-1zM477,387h1v1h-1zM477,386h1v1h-1zM477,385h1v1h-1zM477,384h1v1h-1zM477,379h1v1h-1zM477,377h1v1h-1zM477,373h1v1h-1zM477,370h1v1h-1zM477,366h1v1h-1zM477,361h1v1h-1zM477,356h1v1h-1zM478,410h1v1h-1zM478,405h1v1h-1zM478,403h1v1h-1zM478,402h1v1h-1zM478,400h1v1h-1zM478,397h1v1h-1zM478,391h1v1h-1zM478,379h1v1h-1zM478,377h1v1h-1zM478,376h1v1h-1zM478,374h1v1h-1zM478,370h1v1h-1zM478,366h1v1h-1zM478,361h1v1h-1zM478,357h1v1h-1zM479,410h1v1h-1zM479,404h1v1h-1zM479,403h1v1h-1zM479,401h1v1h-1zM479,397h1v1h-1zM479,391h1v1h-1zM479,379h1v1h-1zM479,377h1v1h-1zM479,376h1v1h-1zM479,374h1v1h-1zM479,370h1v1h-1zM479,366h1v1h-1zM479,360h1v1h-1zM479,357h1v1h-1zM480,410h1v1h-1zM480,404h1v1h-1zM480,401h1v1h-1zM480,397h1v1h-1zM480,391h1v1h-1zM480,378h1v1h-1zM480,375h1v1h-1zM480,370h1v1h-1zM480,366h1v1h-1zM480,365h1v1h-1zM480,360h1v1h-1zM480,358h1v1h-1zM481,404h1v1h-1zM481,401h1v1h-1zM481,396h1v1h-1zM481,395h1v1h-1zM481,394h1v1h-1zM481,393h1v1h-1zM481,392h1v1h-1zM481,378h1v1h-1zM481,375h1v1h-1zM481,369h1v1h-1zM481,368h1v1h-1zM481,367h1v1h-1zM481,358h1v1h-1zM482,359h1v1h-1zM483,359h1v1h-1zM484,361h1v1h-1zM484,360h1v1h-1z"/></g></svg>
<div class="a" style="left:578px;top:236px;width:325px;height:352px;box-sizing:border-box;background:#f0f0f0;border:1px solid #9bbad3;box-shadow:0 0 10px rgba(0,0,0,0.16),0 4px 14px rgba(0,0,0,0.26)"></div>
<div class="a" style="left:578px;top:236px;width:325px;height:31px;box-sizing:border-box;background:#9bbad3"></div>
<div class="a" style="left:587px;top:245px;width:15px;height:12px;box-sizing:border-box;background:#f6f6f6;border:1px solid #a8a8a8"></div>
<div class="a" style="left:589px;top:247px;width:5px;height:8px;box-sizing:border-box;background:linear-gradient(180deg,#6a8ac6,#3f8a8c 45%,#58a86a)"></div>
<div class="a" style="left:596px;top:247px;width:2px;height:8px;box-sizing:border-box;background:#e2e2e2"></div>
<div class="a" style="left:599px;top:247px;width:2px;height:5px;box-sizing:border-box;background:linear-gradient(180deg,#86a6d6,#b4dca8)"></div>
<div class="t" style="left:607.5px;top:245.91px;font-size:12px;color:#000;">Support Line Dynamic Editor</div>
<svg class="a" style="left:882px;top:246px" width="10" height="10" shape-rendering="crispEdges"><path d="M0,0h1v1h-1z M9,0h1v1h-1z M1,1h1v1h-1z M8,1h1v1h-1z M2,2h1v1h-1z M7,2h1v1h-1z M3,3h1v1h-1z M6,3h1v1h-1z M4,4h1v1h-1z M5,4h1v1h-1z M5,5h1v1h-1z M4,5h1v1h-1z M6,6h1v1h-1z M3,6h1v1h-1z M7,7h1v1h-1z M2,7h1v1h-1z M8,8h1v1h-1z M1,8h1v1h-1z M9,9h1v1h-1z M0,9h1v1h-1z " fill="#000"/></svg>
<div class="a" style="left:598px;top:287px;width:86px;height:19px;box-sizing:border-box;background:#f0f0f0;border:1px solid #d9d9d9"></div>
<div class="a" style="left:683px;top:287px;width:117px;height:19px;box-sizing:border-box;background:#f0f0f0;border:1px solid #d9d9d9"></div>
<div class="a" style="left:799px;top:287px;width:84px;height:19px;box-sizing:border-box;background:#f0f0f0;border:1px solid #d9d9d9"></div>
<div class="a" style="left:598px;top:305px;width:96px;height:19px;box-sizing:border-box;background:#f0f0f0;border:1px solid #d9d9d9"></div>
<div class="a" style="left:693px;top:305px;width:93px;height:19px;box-sizing:border-box;background:#f0f0f0;border:1px solid #d9d9d9"></div>
<div class="a" style="left:596px;top:323px;width:289px;height:198px;box-sizing:border-box;background:#fff;border:1px solid #d9d9d9"></div>
<div class="a" style="left:785px;top:303px;width:100px;height:22px;box-sizing:border-box;background:#fff;border:1px solid #d9d9d9;border-bottom:none"></div>
<div class="t" style="left:537px;width:200px;text-align:center;top:292.00px;font-size:10.7px;">Walls</div>
<div class="t" style="left:640.5px;width:200px;text-align:center;top:292.00px;font-size:10.7px;">Middle Strips</div>
<div class="t" style="left:736.5px;width:200px;text-align:center;top:292.00px;font-size:10.7px;">Trim</div>
<div class="t" style="left:545px;width:200px;text-align:center;top:310.00px;font-size:10.7px;">Wizard</div>
<div class="t" style="left:637px;width:200px;text-align:center;top:310.00px;font-size:10.7px;">Limits</div>
<div class="t" style="left:734.7px;width:200px;text-align:center;top:308.00px;font-size:10.7px;">Criteria</div>
<div class="a" style="left:606px;top:336px;width:270px;height:121px;box-sizing:border-box;border:1px solid #dcdcdc"></div>
<div class="a" style="left:612px;top:330px;width:124px;height:11px;box-sizing:border-box;background:#fff"></div>
<div class="t" style="left:615px;top:332.00px;font-size:10.7px;">Tributary Region Criteria</div>
<div class="a" style="left:614px;top:358px;width:23px;height:20px;box-sizing:border-box;background:#00e0e0;border:1px solid #c8c8c8;box-shadow:inset 0 0 0 1px #f8f8f8"></div>
<div class="a" style="left:614px;top:382px;width:23px;height:20px;box-sizing:border-box;background:#00dd00;border:1px solid #c8c8c8;box-shadow:inset 0 0 0 1px #f8f8f8"></div>
<div class="a" style="left:614px;top:406px;width:23px;height:20px;box-sizing:border-box;background:#ffee00;border:1px solid #c8c8c8;box-shadow:inset 0 0 0 1px #f8f8f8"></div>
<div class="a" style="left:641px;top:362px;width:13px;height:13px;box-sizing:border-box;border:1px solid #333;border-radius:50%;background:#fff"></div>
<div class="a" style="left:641px;top:385px;width:13px;height:13px;box-sizing:border-box;border:1px solid #333;border-radius:50%;background:#fff"></div>
<div class="a" style="left:641px;top:409px;width:13px;height:13px;box-sizing:border-box;border:1px solid #333;border-radius:50%;background:#fff"></div>
<div class="a" style="left:644px;top:412px;width:7px;height:7px;border-radius:50%;background:#333"></div>
<div class="t" style="left:657px;top:364.00px;font-size:10.7px;">Two-way</div>
<div class="t" style="left:657px;top:387.00px;font-size:10.7px;">One-way</div>
<div class="t" style="left:657px;top:411.00px;font-size:10.7px;">Beam</div>
<div class="a" style="left:697px;top:428px;width:91px;height:21px;box-sizing:border-box;background:#e1e1e1;border:1px solid #adadad"></div>
<div class="t" style="left:642.5px;width:200px;text-align:center;top:434.00px;font-size:10.7px;">Apply to All SLs</div>
<div class="t" style="left:616.5px;top:469.80px;font-size:10.7px;">Font Size</div>
<div class="a" style="left:665px;top:465px;width:32px;height:20px;box-sizing:border-box;background:#fff;border:1px solid #7a7a7a"></div>
<div class="t" style="left:671px;top:469.80px;font-size:10.7px;">2.00</div>
<div class="t" style="left:702px;top:469.80px;font-size:10.7px;">ft</div>
<div class="a" style="left:721px;top:464px;width:43px;height:21px;box-sizing:border-box;background:#e1e1e1;border:1px solid #adadad"></div>
<div class="t" style="left:642.5px;width:200px;text-align:center;top:469.80px;font-size:10.7px;">Redraw</div>
<div class="a" style="left:606px;top:494px;width:270px;height:23px;box-sizing:border-box;background:#fff;border:1px solid #d9d9d9"></div>
<div class="t" style="left:611px;top:499.00px;font-size:10.7px;color:#6d6d6d;">Select SupportLine to change criteria</div>
<div class="a" style="left:590px;top:536px;width:13px;height:13px;box-sizing:border-box;background:#fff;border:1px solid #333"></div>
<div class="t" style="left:605px;top:538.00px;font-size:10.7px;">Show/Hide Construction Lines</div>
<div class="a" style="left:591px;top:557px;width:58px;height:22px;box-sizing:border-box;background:#e1e1e1;border:2px solid #0078d7"></div>
<div class="t" style="left:519.5px;width:200px;text-align:center;top:563.00px;font-size:10.7px;">Pause</div>
<div class="a" style="left:834px;top:557px;width:58px;height:22px;box-sizing:border-box;background:#e1e1e1;border:1px solid #adadad"></div>
<div class="t" style="left:762.5px;width:200px;text-align:center;top:563.00px;font-size:10.7px;">Close</div>
</body></html>
